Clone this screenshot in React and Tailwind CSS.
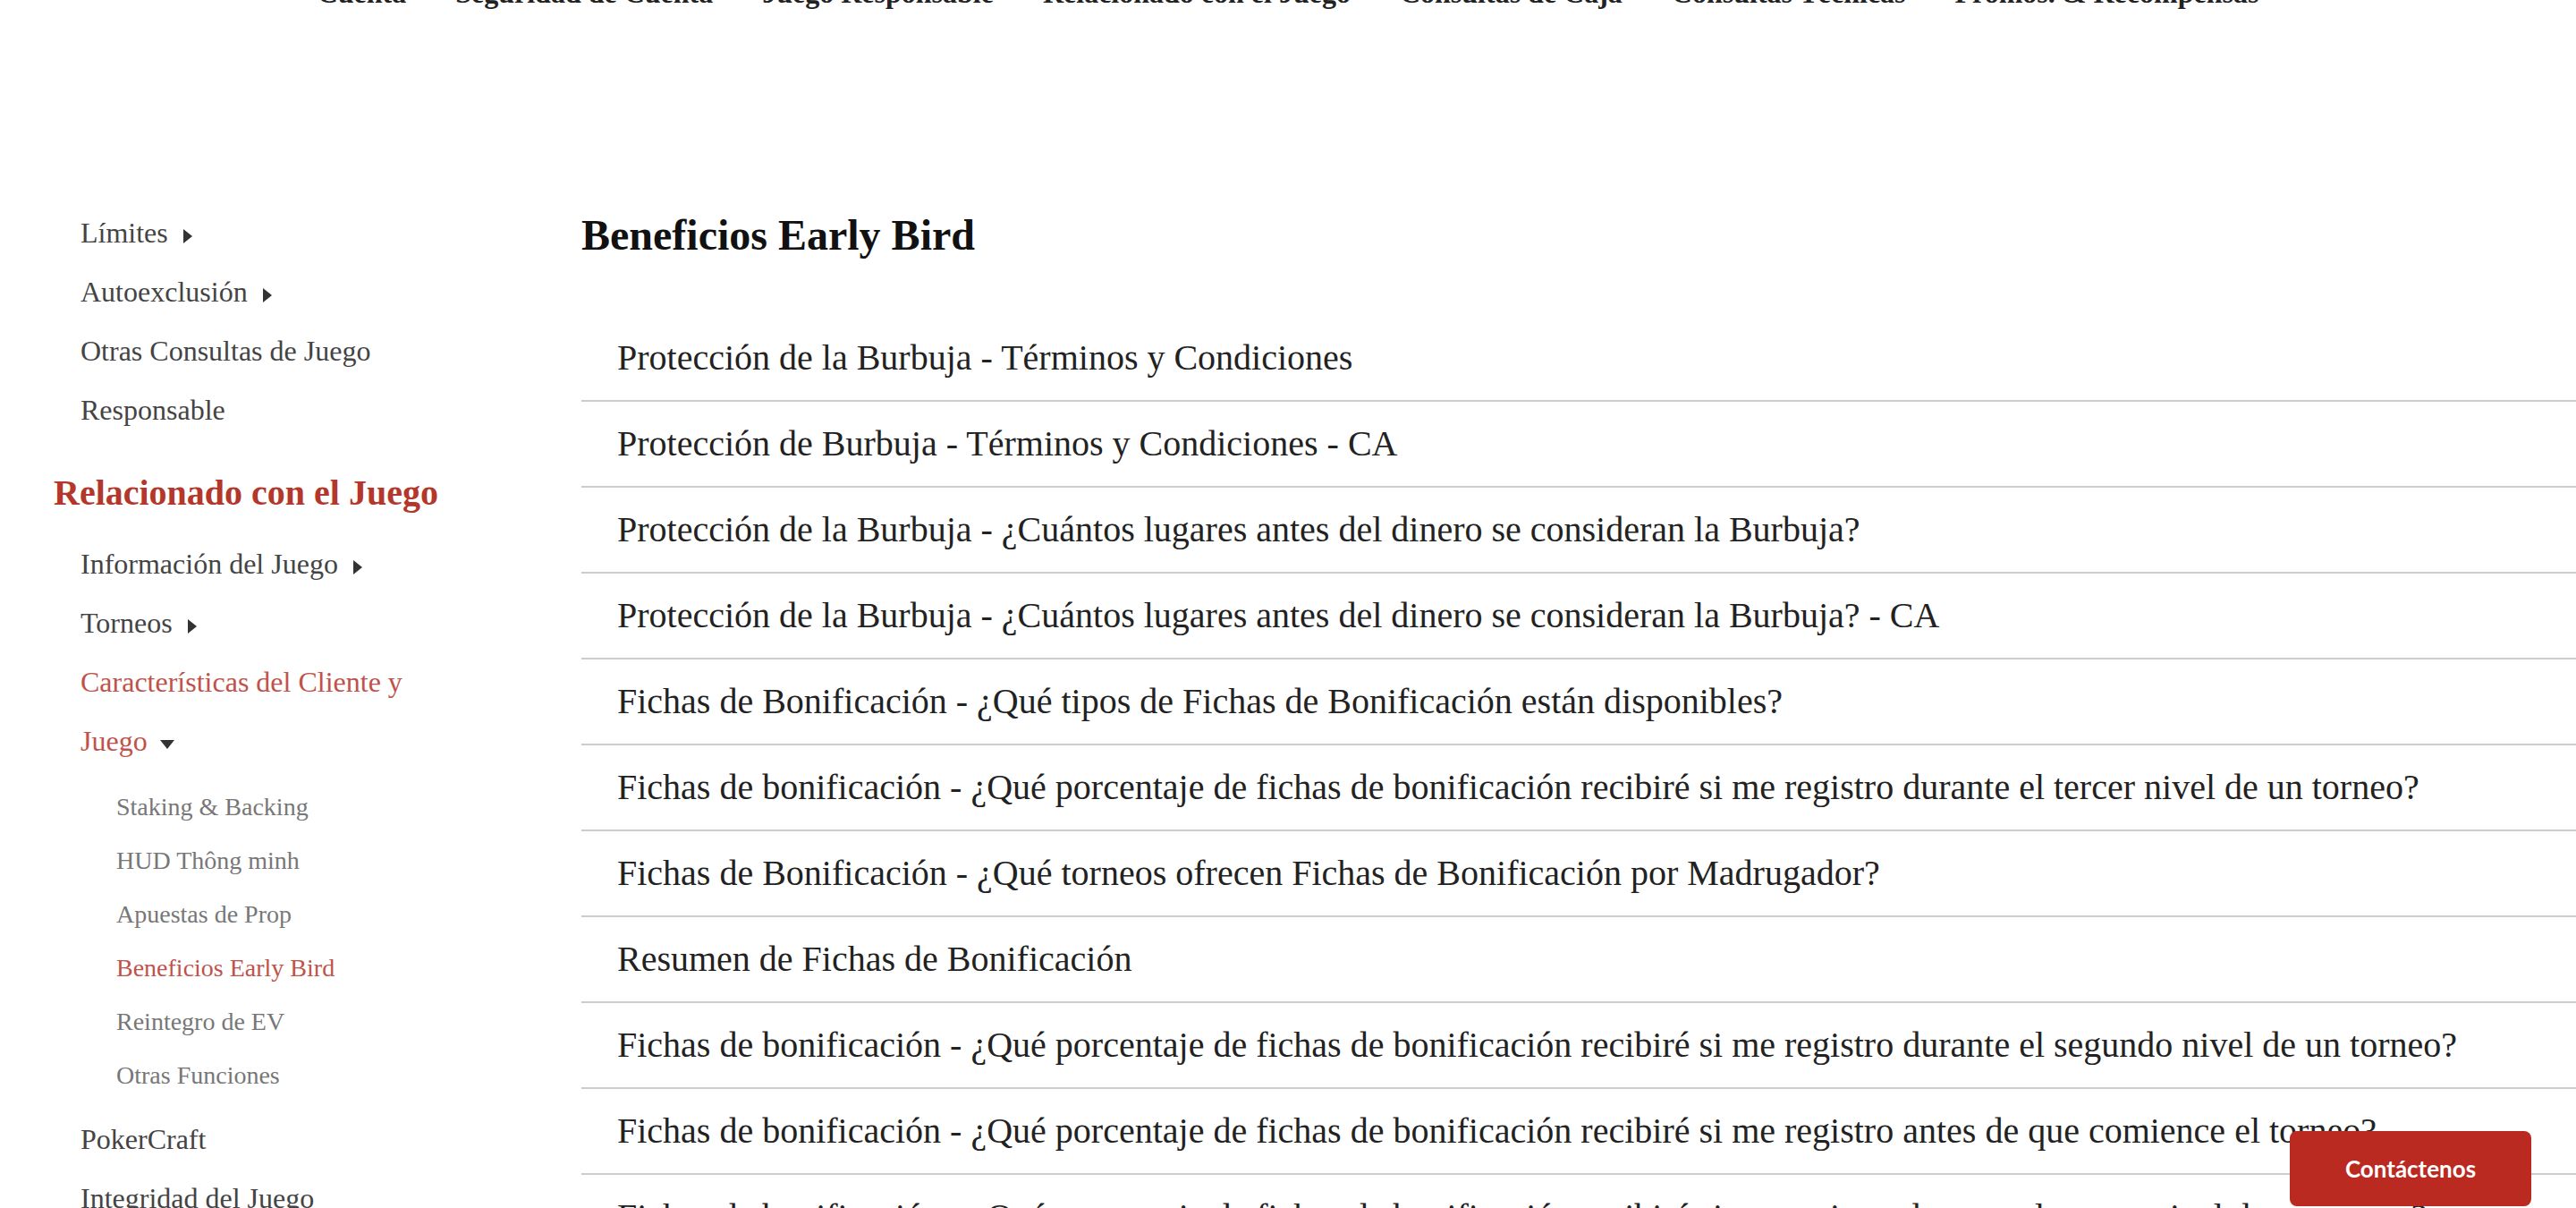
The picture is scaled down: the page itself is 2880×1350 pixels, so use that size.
const nav = [
  "Cuenta",
  "Seguridad de Cuenta",
  "Juego Responsable",
  "Relacionado con el Juego",
  "Consultas de Caja",
  "Consultas Técnicas",
  "Promos. & Recompensas",
];

const articles = [
  "Protección de la Burbuja - Términos y Condiciones",
  "Protección de Burbuja - Términos y Condiciones - CA",
  "Protección de la Burbuja - ¿Cuántos lugares antes del dinero se consideran la Burbuja?",
  "Protección de la Burbuja - ¿Cuántos lugares antes del dinero se consideran la Burbuja? - CA",
  "Fichas de Bonificación - ¿Qué tipos de Fichas de Bonificación están disponibles?",
  "Fichas de bonificación - ¿Qué porcentaje de fichas de bonificación recibiré si me registro durante el tercer nivel de un torneo?",
  "Fichas de Bonificación - ¿Qué torneos ofrecen Fichas de Bonificación por Madrugador?",
  "Resumen de Fichas de Bonificación",
  "Fichas de bonificación - ¿Qué porcentaje de fichas de bonificación recibiré si me registro durante el segundo nivel de un torneo?",
  "Fichas de bonificación - ¿Qué porcentaje de fichas de bonificación recibiré si me registro antes de que comience el torneo?",
  "Fichas de bonificación - ¿Qué porcentaje de fichas de bonificación recibiré si me registro durante el cuarto nivel de un torneo?",
];

const subItems = [
  "Staking & Backing",
  "HUD Thông minh",
  "Apuestas de Prop",
  "Beneficios Early Bird",
  "Reintegro de EV",
  "Otras Funciones",
];

function ArrowRight() {
  return (
    <span className="ml-[17px] inline-block h-0 w-0 align-middle border-y-[8px] border-y-transparent border-l-[10px] border-l-[#333]" />
  );
}

function ArrowDown() {
  return (
    <span className="ml-[14px] inline-block h-0 w-0 align-middle border-x-[8px] border-x-transparent border-t-[10px] border-t-[#333]" />
  );
}

function SideLink({ children, arrow, active }) {
  return (
    <li className={active ? "text-[#c0524a]" : "text-[#444]"}>
      {children}
      {arrow === "right" && <ArrowRight />}
      {arrow === "down" && <ArrowDown />}
    </li>
  );
}

export default function App() {
  return (
    <div className="relative h-screen overflow-hidden bg-white font-['Liberation_Serif',_'Times_New_Roman',_serif]">
      {/* top nav, scrolled mostly out of view */}
      <nav className="-mt-[28px] flex justify-center gap-[55px] text-[32px] font-bold leading-[40px] text-[#222]">
        {nav.map((n) => (
          <span key={n}>{n}</span>
        ))}
      </nav>

      <div className="mt-[215px] flex">
        <aside className="w-[650px] shrink-0 pl-[60px]">
          <ul className="w-[400px] pl-[30px] text-[32px] leading-[66px]">
            <SideLink arrow="right">Límites</SideLink>
            <SideLink arrow="right">Autoexclusión</SideLink>
            <SideLink>Otras Consultas de Juego</SideLink>
            <SideLink>Responsable</SideLink>
          </ul>

          <h3 className="mt-[36px] mb-[22px] text-[40px] font-bold leading-[48px] text-[#b3372b]">
            Relacionado con el Juego
          </h3>

          <ul className="w-[430px] pl-[30px] text-[32px] leading-[66px]">
            <SideLink arrow="right">Información del Juego</SideLink>
            <SideLink arrow="right">Torneos</SideLink>
            <SideLink arrow="down" active>
              Características del Cliente y Juego
            </SideLink>
            <li>
              <ul className="mt-[11px] mb-[8px] pl-[40px] text-[28px] leading-[60px]">
                {subItems.map((s) => (
                  <li
                    key={s}
                    className={s === "Beneficios Early Bird" ? "text-[#c0524a]" : "text-[#777]"}
                  >
                    {s}
                  </li>
                ))}
              </ul>
            </li>
            <SideLink>PokerCraft</SideLink>
            <SideLink>Integridad del Juego</SideLink>
          </ul>
        </aside>

        <main className="min-w-0 flex-1 pt-[7px]">
          <h1 className="mb-[61px] text-[48px] font-bold leading-[58px] text-[#111]">
            Beneficios Early Bird
          </h1>
          <ul>
            {articles.map((a, i) => (
              <li
                key={i}
                className="whitespace-nowrap border-b-2 border-[#ccc] py-[17px] pl-[40px] text-[40px] leading-[60px] text-[#222]"
              >
                {a}
              </li>
            ))}
          </ul>
        </main>
      </div>

      <button className="absolute bottom-[2px] right-[50px] flex h-[84px] w-[270px] items-center justify-center rounded-[8px] bg-[#bb2a20] font-['Lato',_sans-serif] text-[26px] font-bold text-white">
        Contáctenos
      </button>
    </div>
  );
}
